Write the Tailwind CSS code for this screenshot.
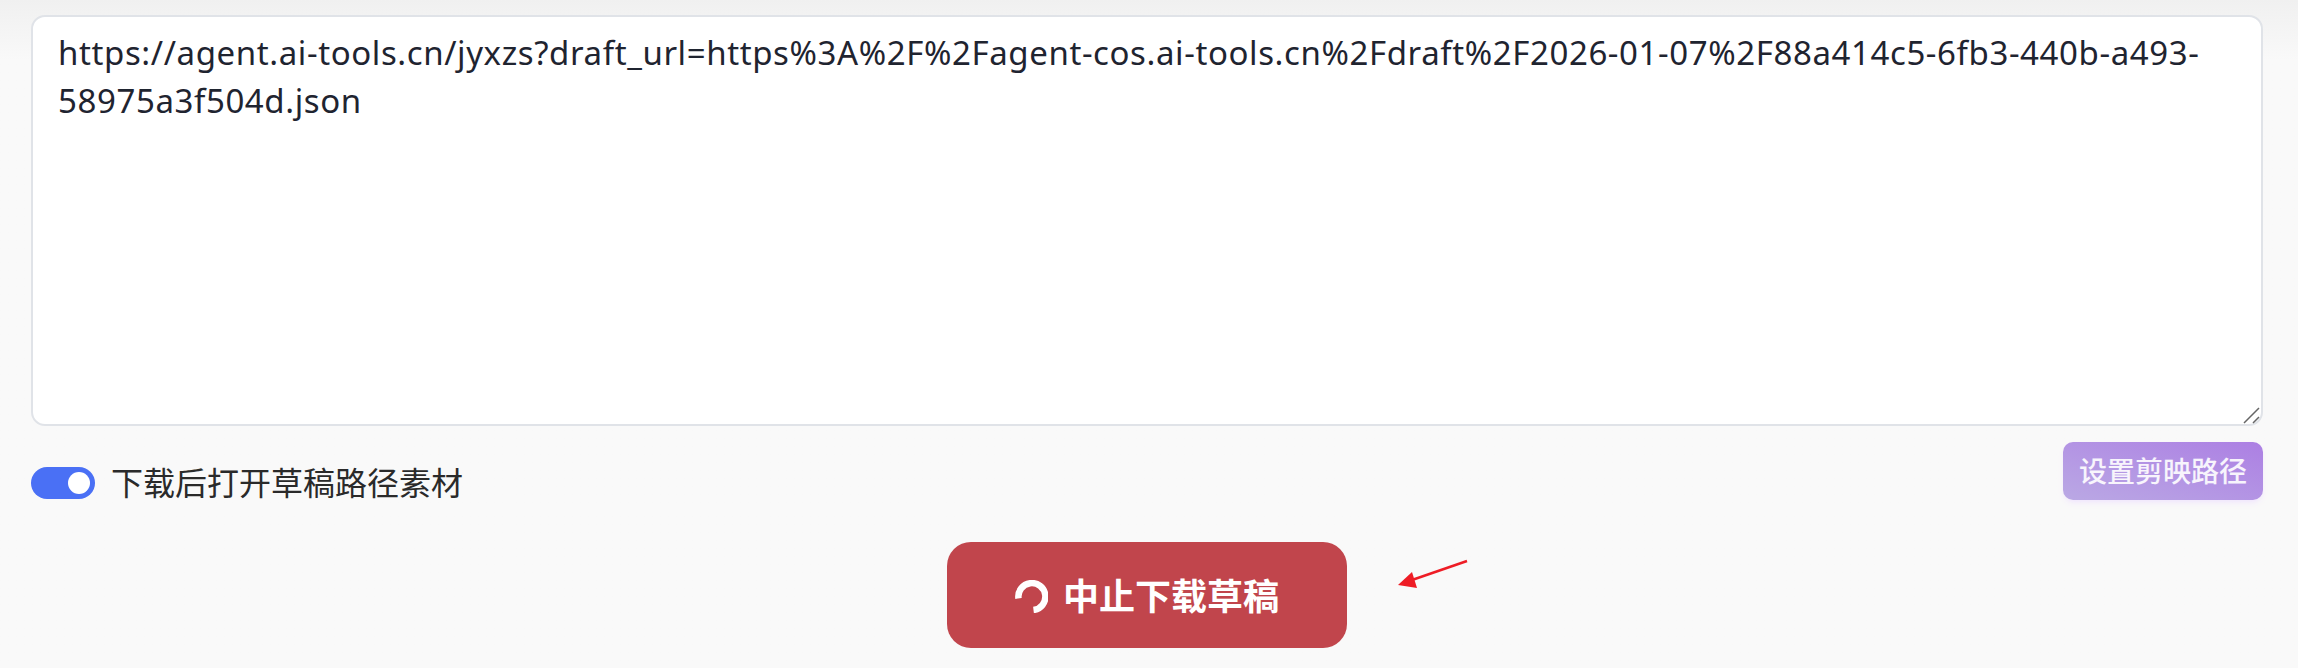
<!DOCTYPE html>
<html lang="zh-CN">
<head>
    <meta charset="UTF-8">
    <title>下载草稿</title>
    <script src="https://cdn.jsdelivr.net/npm/@tailwindcss/browser@4"></script>
</head>
<body class="h-[668px] overflow-hidden bg-gradient-to-b from-[#f0f0f0] to-[#f9f9f9] to-[60px] font-['Noto_Sans','Noto_Sans_CJK_SC',sans-serif] text-[#222]">
    <div class="relative h-full pl-[31px] pr-[35px] pt-[15px]">
        <div class="relative">
            <textarea class="block h-[411px] w-full resize-none rounded-[14px] border-2 border-[#e0e3e8] bg-white px-[25px] py-[12px] text-[33px] leading-[48px] tracking-[0.6px] text-[#1f2430] outline-none">https://agent.ai-tools.cn/jyxzs?draft_url=https%3A%2F%2Fagent-cos.ai-tools.cn%2Fdraft%2F2026-01-07%2F88a414c5-6fb3-440b-a493-58975a3f504d.json</textarea>
            <svg class="absolute bottom-[2px] right-[3px] h-[17px] w-[17px]" viewBox="0 0 17 17" fill="none" stroke="#666" stroke-width="1.5">
                <path d="M1 16 L16 1 M10 16 L16 10" />
            </svg>
        </div>

        <div class="mt-[16px] flex items-start justify-between">
            <div class="mt-[24px] flex items-center gap-[16px]">
                <div class="flex h-[32px] w-[64px] items-center justify-end rounded-full bg-[#4a70f5] pr-[5px]">
                    <div class="h-[22px] w-[22px] rounded-full bg-white"></div>
                </div>
                <span class="text-[32px] leading-[34px] text-[#2a2a2a]">下载后打开草稿路径素材</span>
            </div>
            <button class="h-[58px] w-[200px] rounded-[10px] bg-gradient-to-tr from-[#baa8e4] to-[#ac7fe3] text-[28px] font-medium text-white/90 shadow-md shadow-purple-200/40">设置剪映路径</button>
        </div>

        <div class="mt-[42px] flex justify-center">
            <button class="flex h-[106px] w-[400px] items-center justify-center gap-[15px] rounded-[24px] bg-[#c1454c] pt-[3px] text-[36px] font-bold text-white">
                <svg class="h-[33px] w-[33px]" viewBox="0 0 33 33" fill="none" stroke="currentColor" stroke-width="6.5">
                    <path d="M3.5 18.5 A13.5 13.5 0 1 1 18.5 30" />
                </svg>
                <span>中止下载草稿</span>
            </button>
        </div>

        <svg class="absolute left-[1390px] top-[555px] h-[40px] w-[85px]" viewBox="1390 555 85 40">
            <line x1="1467" y1="561" x2="1412" y2="580" stroke="#ee1c25" stroke-width="2.5" />
            <polygon points="1398,585 1412,572 1417,588" fill="#ee1c25" />
        </svg>
    </div>
</body>
</html>
